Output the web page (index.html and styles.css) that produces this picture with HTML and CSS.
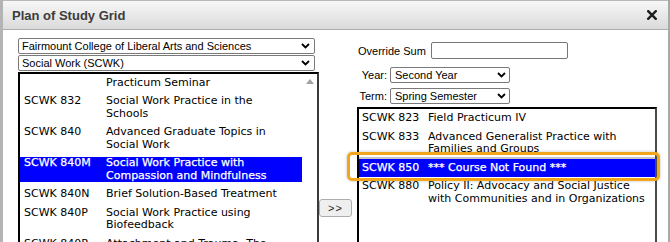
FILE: index.html
```html
<!DOCTYPE html>
<html>
<head>
<meta charset="utf-8">
<link rel="stylesheet" href="styles.css">
</head>
<body>
<div class="dialog">
  <div class="titlebar">
    <span class="title">Plan of Study Grid</span>
    <svg class="close" width="10" height="10" viewBox="0 0 10 10"><path d="M1.2 1.2 L8.8 8.8 M8.8 1.2 L1.2 8.8" stroke="#1e1e1e" stroke-width="2.4" stroke-linecap="square"/></svg>
  </div>
  <div class="content">
    <div class="col-left">
      <div class="select wide"><span>Fairmount College of Liberal Arts and Sciences</span><svg class="chev" viewBox="0 0 9 6"><path d="M1 1 L4.5 4.5 L8 1" fill="none" stroke="#000" stroke-width="1.8"/></svg></div>
      <div class="select wide"><span>Social Work (SCWK)</span><svg class="chev" viewBox="0 0 9 6"><path d="M1 1 L4.5 4.5 L8 1" fill="none" stroke="#000" stroke-width="1.8"/></svg></div>
      <div class="listbox left-list">
        <div class="list-inner">
          <div class="row"><span class="code"></span><span class="name">Practicum Seminar</span></div>
          <div class="row"><span class="code">SCWK 832</span><span class="name">Social Work Practice in the Schools</span></div>
          <div class="row"><span class="code">SCWK 840</span><span class="name">Advanced Graduate Topics in Social Work</span></div>
          <div class="row sel"><span class="code">SCWK 840M</span><span class="name">Social Work Practice with Compassion and Mindfulness</span></div>
          <div class="row"><span class="code">SCWK 840N</span><span class="name">Brief Solution-Based Treatment</span></div>
          <div class="row"><span class="code">SCWK 840P</span><span class="name">Social Work Practice using Biofeedback</span></div>
          <div class="row"><span class="code">SCWK 840R</span><span class="name">Attachment and Trauma: The Neurobiology of Relationships</span></div>
        </div>
        <div class="scrollbar"><span class="arrow-up"></span></div>
      </div>
    </div>
    <div class="col-mid">
      <button class="move-btn">&gt;&gt;</button>
    </div>
    <div class="col-right">
      <div class="override-row"><span class="lbl-o">Override Sum</span><div class="input"></div></div>
      <div class="form-grid">
        <span class="lbl">Year:</span>
        <div class="select narrow"><span>Second Year</span><svg class="chev" viewBox="0 0 9 6"><path d="M1 1 L4.5 4.5 L8 1" fill="none" stroke="#000" stroke-width="1.8"/></svg></div>
        <span class="lbl">Term:</span>
        <div class="select narrow"><span>Spring Semester</span><svg class="chev" viewBox="0 0 9 6"><path d="M1 1 L4.5 4.5 L8 1" fill="none" stroke="#000" stroke-width="1.8"/></svg></div>
      </div>
      <div class="listbox right-list">
        <div class="list-inner r">
          <div class="row"><span class="code">SCWK 823</span><span class="name">Field Practicum IV</span></div>
          <div class="row"><span class="code">SCWK 833</span><span class="name">Advanced Generalist Practice with Families and Groups</span></div>
          <div class="row sel focus"><span class="code">SCWK 850</span><span class="name">*** Course Not Found ***</span></div>
          <div class="row"><span class="code">SCWK 880</span><span class="name">Policy II: Advocacy and Social Justice with Communities and in Organizations</span></div>
        </div>
      </div>
    </div>
  </div>
</div>
<div class="annotation"></div>
</body>
</html>
```

FILE: styles.css
```css
html, body {
  margin: 0;
  padding: 0;
}
body {
  width: 670px;
  height: 242px;
  overflow: hidden;
  background: #fff;
  position: relative;
  font-family: "Liberation Sans", Arial, sans-serif;
}
.dialog {
  width: 670px;
  height: 242px;
  box-sizing: border-box;
  border-left: 3px solid #b4b4b4;
  border-right: 2px solid #a9a9a9;
  background: #fff;
}
.titlebar {
  height: 30px;
  box-sizing: border-box;
  border-top: 1px solid #b9b9b9;
  border-bottom: 1px solid #acacac;
  background: linear-gradient(#f7f7f7, #dadada);
  display: flex;
  align-items: center;
  justify-content: space-between;
  padding: 0 11px 0 9px;
}
.title {
  font-weight: bold;
  font-size: 13px;
  color: #3c3c3c;
}
.close {
  display: block;
}
.content {
  display: flex;
  padding-left: 15px;
}
.col-left {
  width: 301px;
  padding-top: 8px;
  display: flex;
  flex-direction: column;
}
.select {
  height: 16px;
  box-sizing: border-box;
  border: 1px solid #7a7a7a;
  border-radius: 2px;
  display: flex;
  align-items: center;
  justify-content: space-between;
  font-size: 11px;
  color: #000;
  background: #fff;
  white-space: nowrap;
}
.select.wide {
  width: 297px;
  margin-bottom: 1px;
  padding: 0 4px 0 3px;
}
.select.narrow {
  width: 120px;
  padding: 0 3px 0 4px;
}
.chev {
  width: 9px;
  height: 6px;
  display: block;
}
.listbox {
  border: 2px solid #000;
  box-sizing: border-box;
  background: #fff;
}
.left-list {
  width: 301px;
  height: 200px;
  display: flex;
  border-right-color: #3a3a3a;
}
.list-inner {
  flex: 1;
  display: flex;
  flex-direction: column;
  gap: 6px;
  padding-top: 2.5px;
  font-family: "DejaVu Sans", Verdana, sans-serif;
  font-size: 11px;
  line-height: 12.5px;
  color: #000;
}
.list-inner.r {
  padding-top: 3px;
}
.row {
  display: flex;
}
.code {
  width: 86px;
  padding-left: 4px;
  box-sizing: border-box;
  flex-shrink: 0;
}
.name {
  flex: 1;
  padding-right: 12px;
}
.r .code {
  width: 69px;
  padding-left: 3px;
}
.r .name {
  padding-right: 2px;
}
.row.sel {
  background: #0000ff;
  color: #fff;
  -webkit-text-stroke: 0.25px #fff;
}
.row.focus {
  padding: 2.75px 0;
  margin: -2.75px 0;
  box-shadow: 0 -2px 0 #c6c6c6;
}
.scrollbar {
  width: 15px;
  display: flex;
  justify-content: center;
  align-items: flex-start;
  padding-top: 5px;
  box-sizing: border-box;
}
.arrow-up {
  width: 0;
  height: 0;
  border-left: 4.5px solid transparent;
  border-right: 4.5px solid transparent;
  border-bottom: 5px solid #a3a3a3;
}
.col-mid {
  width: 38px;
  padding-top: 169px;
}
.move-btn {
  display: block;
  width: 33px;
  height: 18px;
  margin: 0;
  padding: 0;
  border: 1px solid #adadad;
  border-radius: 3px;
  background: #efefef;
  font-family: "Liberation Sans", Arial, sans-serif;
  font-size: 11px;
  color: #222;
  letter-spacing: 1px;
}
.col-right {
  width: 300px;
  padding-top: 12px;
  display: flex;
  flex-direction: column;
  font-size: 11px;
  color: #000;
}
.override-row {
  display: flex;
  align-items: center;
  gap: 5px;
  padding-left: 1px;
  height: 17px;
}
.input {
  width: 137px;
  height: 17px;
  box-sizing: border-box;
  border: 1px solid #767676;
  border-radius: 2px;
  background: #fff;
}
.form-grid {
  display: grid;
  grid-template-columns: 30px 120px;
  column-gap: 3px;
  row-gap: 5px;
  margin-top: 8px;
  align-items: center;
}
.lbl {
  text-align: right;
}
.right-list {
  width: 300px;
  height: 200px;
  margin-top: 3px;
  display: flex;
  border-right-color: #4a4a4a;
}
.annotation {
  position: absolute;
  left: 347px;
  top: 152px;
  width: 313px;
  height: 29px;
  box-sizing: border-box;
  border: 3px solid #f2a61c;
  border-radius: 5px;
  box-shadow: 0 0 3px rgba(0, 0, 0, 0.25);
}
```
